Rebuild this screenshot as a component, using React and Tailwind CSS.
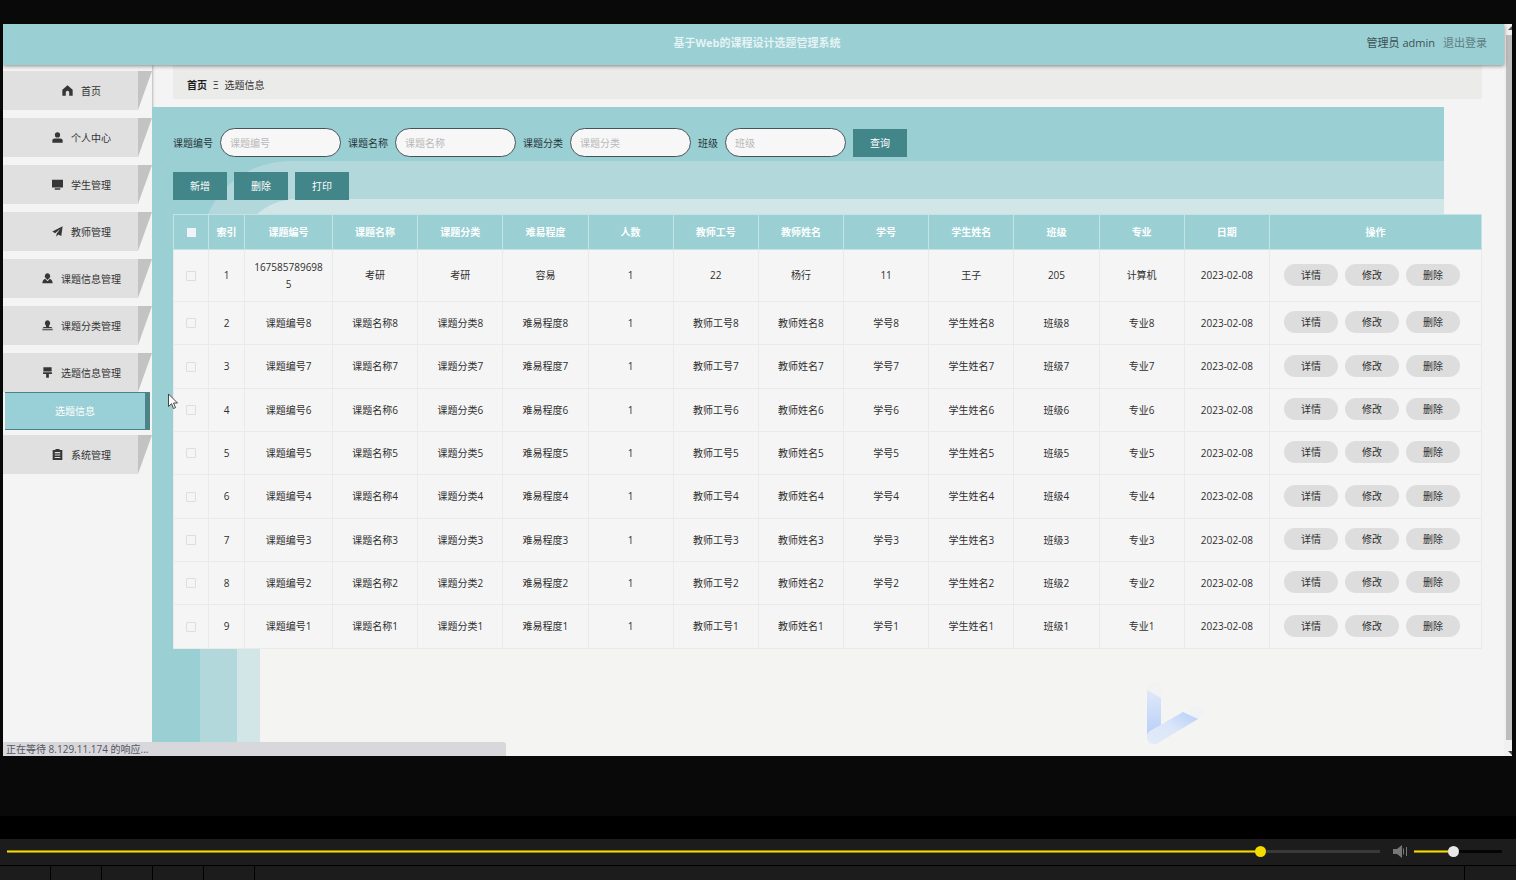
import React, { useState } from "react";

const menuItems = [
  { label: "首页", icon: "home" },
  { label: "个人中心", icon: "user" },
  { label: "学生管理", icon: "monitor" },
  { label: "教师管理", icon: "send" },
  { label: "课题信息管理", icon: "custom" },
  { label: "课题分类管理", icon: "stamp" },
  { label: "选题信息管理", icon: "brush", child: "选题信息" },
  { label: "系统管理", icon: "clipboard" },
];

const iconPaths = {
  home: "M8 0.500 0.500 7v8.500h5V11a2.500 2.500 0 0 1 5 0v4.500h5V7z",
  user: "M8 0.500a3.800 3.800 0 1 1 0 7.600a3.800 3.800 0 0 1 0-7.600zM0.500 15.500v-3c0-2 1.500-3.200 3.500-3.200h8c2 0 3.500 1.200 3.500 3.200v3z",
  monitor: "M0 1h16v11.500H0zM4 13.500h8V15.500H4z",
  send: "M15.500 0.500 0.500 8l4 2.500L12 4.500 6.500 11.500V15.500l2.500-3 4.500 2z",
  custom: "M8 0.500a4 4 0 0 1 2.500 7.100L8 10 5.500 7.600A4 4 0 0 1 8 0.500zM4.500 8.500 8 12l3.500-3.500c2.500 1 4 3.500 4 6.500H0.500c0-3 1.500-5.500 4-6.500z",
  stamp: "M8 0.500a4 4 0 0 1 2.500 7L10 10h3.500l2 2H0.500l2-2H6l-0.500-2.500A4 4 0 0 1 8 0.500zM0.500 13.500h15V15h-15z",
  brush: "M2 0.500h12v6H2zM1.500 7.500h13V10H10v5.500H6V10H1.500z",
  clipboard: "M5 0h6v1.500h4V16H1V1.500h4zM4 4.500V6h8V4.500zM4 8v1.500h8V8zM4 11.500V13h8v-1.500z",
};

const columns = [
  "课题编号", "课题名称", "课题分类", "难易程度", "人数", "教师工号",
  "教师姓名", "学号", "学生姓名", "班级", "专业", "日期",
];

const rows = [
  ["1675857896985", "考研", "考研", "容易", "1", "22", "杨行", "11", "王子", "205", "计算机", "2023-02-08"],
  ...[8, 7, 6, 5, 4, 3, 2, 1].map((n) => [
    `课题编号${n}`, `课题名称${n}`, `课题分类${n}`, `难易程度${n}`, "1", `教师工号${n}`,
    `教师姓名${n}`, `学号${n}`, `学生姓名${n}`, `班级${n}`, `专业${n}`, "2023-02-08",
  ]),
];

const filters = ["课题编号", "课题名称", "课题分类", "班级"];

const MenuIcon = ({ name }) => (
  <svg viewBox="0 0 16 16" className="size-[11px] shrink-0" fill="#363636" fillRule="evenodd" aria-hidden="true">
    <path d={iconPaths[name]} />
  </svg>
);

const Header = () => (
  <header className="relative z-10 grid h-[41px] grid-cols-[1fr_auto_1fr] items-center bg-[#9acfd4] pb-1 pr-[17px] shadow-[0_1px_4px_rgba(0,0,0,0.45)]">
    <span />
    <h1 className="pl-6 text-[11px] font-bold leading-4 text-white/75">基于Web的课程设计选题管理系统</h1>
    <div className="flex justify-end gap-2 text-[11px] leading-4 text-[#3b5153]">
      <span>管理员 admin</span>
      <a href="#logout" className="text-[#5f7c7f]">退出登录</a>
    </div>
  </header>
);

const Sidebar = () => (
  <nav className="relative w-[149px] shrink-0 bg-[#f4f4f4] pt-[6px] shadow-[0_0_3px_rgba(0,0,0,0.45)]">
    <ul>
      {menuItems.map((item) => (
        <li key={item.label} className={item.child ? "mb-[5px]" : "mb-2"}>
          <a href="#menu" className="flex h-[39px]">
            <span className="flex flex-1 items-center justify-center gap-2 bg-[#e0e0e0] pl-[22px] text-[10px] leading-4 text-[#333]">
              <MenuIcon name={item.icon} />
              {item.label}
            </span>
            <span className="w-[14px] bg-[#c3c3c3] [clip-path:polygon(0_0,100%_0,0_100%)]" />
          </a>
          {item.child && (
            <a
              href="#topic"
              className="ml-[2px] mr-[2px] flex h-[38px] items-center justify-center border-y border-r-[5px] border-[#4b8386] bg-[#99cfd6] text-[10px] leading-4 text-white"
            >
              {item.child}
            </a>
          )}
        </li>
      ))}
    </ul>
  </nav>
);

// stepped rounded bands behind the table
const Bands = () => (
  <div className="absolute inset-y-0 left-0 right-[60px] bg-[#9acfd4] pl-12 pt-[54px]">
    <div className="h-full rounded-tl-[90px] bg-[#b3d8dc] pl-[37px] pt-[38px]">
      <div className="h-full rounded-tl-[60px] bg-[#d2e5e7] pl-[23px] pt-6">
        <div className="h-full bg-[#f4f4f3]" />
      </div>
    </div>
  </div>
);

const SolidButton = ({ children }) => (
  <button type="button" className="h-7 w-[54px] bg-[#42868a] text-[10px] leading-4 text-white">
    {children}
  </button>
);

const SearchForm = () => (
  <form className="flex items-center gap-[7px]" onSubmit={(e) => e.preventDefault()}>
    {filters.map((name) => (
      <div key={name} className="flex items-center gap-[7px]">
        <label htmlFor={`filter-${name}`} className="text-[10px] leading-4 text-[#263638]">{name}</label>
        <input
          id={`filter-${name}`}
          placeholder={name}
          className="h-[29px] w-[121px] rounded-full border border-[#46545a] bg-[#f7f7f7] px-[9px] text-[10px] leading-4 placeholder:text-[#b9b9b9]"
        />
      </div>
    ))}
    <SolidButton>查询</SolidButton>
  </form>
);

const DataTable = () => (
  <table className="w-full table-fixed border-collapse bg-[#f5f5f5] text-center text-[10px] leading-[17px] text-[#2f2f2f]">
    <colgroup>
      <col className="w-[35px]" />
      <col className="w-[36px]" />
      <col className="w-[88px]" />
      {columns.slice(1).map((name) => <col key={name} />)}
      <col className="w-[212px]" />
    </colgroup>
    <thead>
      <tr className="h-[35px] bg-[#9acfd4] text-white">
        <th className="border border-[#c5e2e5]">
          <input type="checkbox" aria-label="全选" className="mx-auto block size-[9px] appearance-none bg-[#f1f3fb]" />
        </th>
        {["索引", ...columns, "操作"].map((name) => (
          <th key={name} className="border border-[#c5e2e5] font-bold">{name}</th>
        ))}
      </tr>
    </thead>
    <tbody>
      {rows.map((row, i) => (
        <tr key={row[0]} className={i === 0 ? "h-[52px]" : "h-[43px] nth-[3n]:h-11"}>
          <td className="border border-[#e9ebeb]">
            <input type="checkbox" aria-label={`选择第${i + 1}行`} className="mx-auto block size-[10px] appearance-none rounded-[1px] border border-[#dedede]" />
          </td>
          <td className="border border-[#e9ebeb]">{i + 1}</td>
          {row.map((cell, j) => (
            <td key={j} className="break-all border border-[#e9ebeb] px-[7px]">{cell}</td>
          ))}
          <td className="border border-[#e9ebeb] pb-[2px] pl-[14px]">
            <div className="flex gap-[7px]">
              {["详情", "修改", "删除"].map((action) => (
                <button key={action} type="button" className="h-[22px] w-[54px] rounded-full bg-[#dddddd] leading-4">
                  {action}
                </button>
              ))}
            </div>
          </td>
        </tr>
      ))}
    </tbody>
  </table>
);

const Watermark = () => (
  <svg viewBox="0 0 58 64" className="absolute bottom-2.5 right-[299px] h-16 w-[58px]" aria-hidden="true">
    <defs>
      <linearGradient id="stem" x1="0" y1="0" x2="0" y2="1">
        <stop offset="0" stopColor="#dfe8f8" />
        <stop offset="1" stopColor="#b9d0f8" />
      </linearGradient>
      <linearGradient id="arm" x1="0" y1="1" x2="1" y2="0">
        <stop offset="0.100" stopColor="#e2eaf8" />
        <stop offset="0.500" stopColor="#dbe6f9" />
        <stop offset="1" stopColor="#b4cef9" />
      </linearGradient>
    </defs>
    <path d="M0 7a7 7 0 0 1 14 0v9L0 8z" fill="#f3f2f3" />
    <circle cx="50" cy="30" r="7" fill="#f1f2f3" />
    <path d="M0 8 14 16V44L0 53z" fill="url(#stem)" />
    <path d="M3 49 36 30 51 37 11 61A7 7 0 0 1 3 49z" fill="url(#arm)" />
  </svg>
);

const Scrollbar = () => (
  <div className="flex w-2 shrink-0 flex-col items-end overflow-hidden bg-[#f0f0f0]">
    <svg viewBox="0 0 4 11" className="h-[11px] w-1" aria-hidden="true"><path d="M0 6 4 2v4z" fill="#555" /></svg>
    <div className="w-[6px] flex-1 bg-[#bdbdbd]" />
    <svg viewBox="0 0 4 16" className="h-4 w-1" aria-hidden="true"><path d="M0 11h4v4z" fill="#444" /></svg>
  </div>
);

const Slider = ({ label, initial, rest, className }) => {
  const [value, setValue] = useState(initial);
  return (
    <input
      type="range"
      aria-label={label}
      min="0"
      max="1000"
      value={value}
      onChange={(e) => setValue(Number(e.target.value))}
      className={`h-[11px] appearance-none bg-[length:100%_3px] bg-center bg-no-repeat [&::-webkit-slider-thumb]:size-[11px] [&::-webkit-slider-thumb]:appearance-none [&::-webkit-slider-thumb]:rounded-full ${className}`}
      style={{
        backgroundImage: `linear-gradient(to right, transparent ${value / 10}%, ${rest} ${value / 10}%), linear-gradient(#97860a 1px, #f4dc00 1px 2px, #97860a 2px)`,
      }}
    />
  );
};

const Player = () => (
  <>
    <div className="flex h-[26px] items-center bg-[#1c1c1c] pb-px pl-[7px] pr-[14px]">
      <Slider label="播放进度" initial={916} rest="#383838" className="min-w-0 flex-1 [&::-webkit-slider-thumb]:bg-[#f5dc00]" />
      <button type="button" aria-label="音量" className="ml-[13px] mr-[6px]">
        <svg viewBox="0 0 15 13" className="h-[13px] w-[15px]" aria-hidden="true">
          <path d="M0 4h4l5-4v13L4 9H0z" fill="#777" />
          <path d="M10.500 3.500v6M13.500 2v9" stroke="#777" fill="none" />
        </svg>
      </button>
      <Slider label="音量大小" initial={440} rest="#050505" className="w-[88px] [&::-webkit-slider-thumb]:bg-[#e8e8e8]" />
    </div>
    <div className="mt-px flex min-h-[14px] flex-1 gap-px">
      {[0, 1, 2, 3, 4].map((n) => <div key={n} className="w-[50px] bg-[#1c1c1c]" />)}
      <div className="flex-1 bg-[#1c1c1c]" />
      <div className="w-[51px] bg-[#1c1c1c]" />
    </div>
  </>
);

const App = () => (
  <div className="flex min-h-screen flex-col bg-black font-['Open_Sans','Noto_Sans_CJK_SC',sans-serif]">
    <div className="mb-[23px] bg-[#090909] pb-[60px] pl-[3px] pr-1 pt-6">
      <div className="relative flex bg-[#f4f4f4]">
        <div className="flex min-w-0 flex-1 flex-col">
          <Header />
          <div className="flex flex-1">
            <Sidebar />
            <main className="min-w-0 flex-1">
              <div className="pb-2 pl-[21px] pr-[22px]">
                <div className="flex h-[34px] items-center gap-[6px] bg-[#ebebea] px-[14px] pt-[6px] text-[10px] leading-4 text-[#333]">
                  <a href="#home" className="font-bold text-[#1c1c1c]">首页</a>
                  <span>Ξ</span>
                  <span>选题信息</span>
                </div>
              </div>
              <div className="relative">
                <Bands />
                <div className="relative pb-[107px] pl-[21px] pr-[22px] pt-[21px]">
                  <SearchForm />
                  <div className="mb-[14px] mt-[15px] flex gap-[7px]">
                    <SolidButton>新增</SolidButton>
                    <SolidButton>删除</SolidButton>
                    <SolidButton>打印</SolidButton>
                  </div>
                  <DataTable />
                </div>
                <Watermark />
                <svg viewBox="0 0 11 17" className="absolute left-4 top-[286px] h-[17px] w-[11px]" aria-hidden="true">
                  <path d="M0.500 1v12.500l3-2.800 2 4.800 2-0.900-2-4.600H9.500z" fill="#fff" stroke="#333" strokeWidth="0.900" />
                </svg>
              </div>
            </main>
          </div>
        </div>
        <Scrollbar />
        <div className="absolute bottom-0 left-0 w-1/3 rounded-tr-[3px] bg-[#d8d8dc] pl-[3px] text-[10px] leading-[14px] text-[#55555c]">
          正在等待 8.129.11.174 的响应...
        </div>
      </div>
    </div>
    <Player />
  </div>
);

export default App;
